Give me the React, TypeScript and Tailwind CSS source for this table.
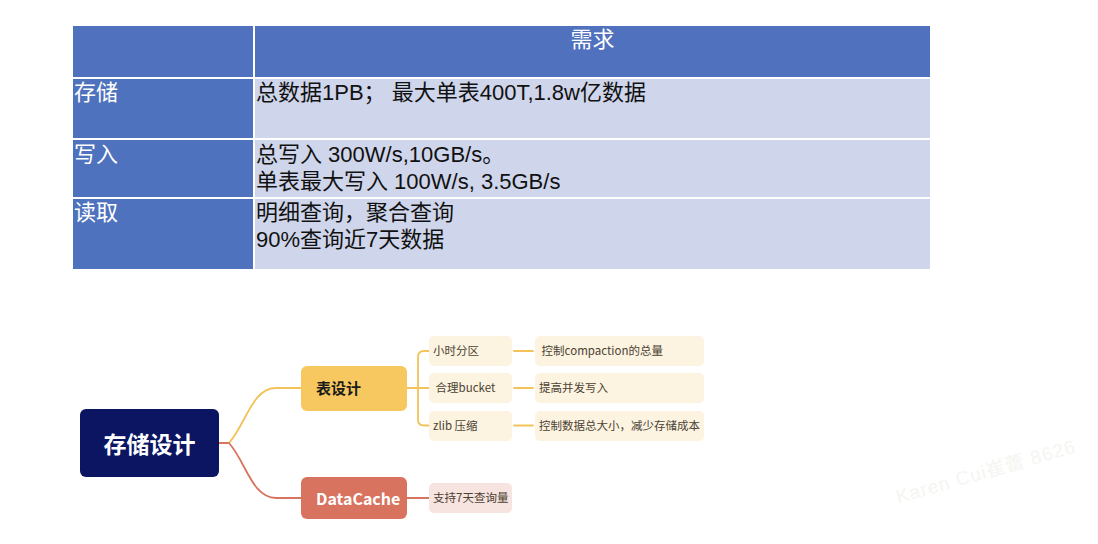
const rows = [
  { label: '存储', h: 'h-[59px]', lines: ['总数据1PB； 最大单表400T,1.8w亿数据'] },
  { label: '写入', h: 'h-[57px] pt-[1px]', lines: ['总写入 300W/s,10GB/s。', '单表最大写入 100W/s, 3.5GB/s'] },
  { label: '读取', h: 'h-[70px]', lines: ['明细查询，聚合查询', '90%查询近7天数据'] },
];

const tableDesign = [
  { name: '小时分区', note: ' 控制compaction的总量', top: 'top-[16px]' },
  { name: ' 合理bucket', note: '提高并发写入', top: 'top-[53px]' },
  { name: 'zlib 压缩', note: '控制数据总大小，减少存储成本', top: 'top-[91px]' },
];

function RequirementTable() {
  return (
    <div className="pl-[73px] pt-[26px]">
      <div className="grid w-[857px] grid-cols-[180px_675px] gap-x-[2px] gap-y-[2px] whitespace-pre font-['Liberation_Sans','Noto_Sans_CJK_SC',sans-serif] text-[22px] leading-[27px] text-[#111]">
        <div className="h-[51px] bg-[#4f71be]" />
        <div className="h-[51px] bg-[#4f71be] text-center text-white">需求</div>
        {rows.map((r) => (
          <>
            <div key={r.label + 'l'} className={`${r.h} bg-[#4e72bd] pl-[1px] text-white`}>
              {r.label}
            </div>
            <div key={r.label + 'r'} className={`${r.h} bg-[#cfd5ea] pl-[1px]`}>
              {r.lines.map((line) => (
                <div key={line}>{line}</div>
              ))}
            </div>
          </>
        ))}
      </div>
    </div>
  );
}

function MindMap() {
  return (
    <div className="relative mt-[51px] h-[210px] w-full font-['Noto_Sans_CJK_SC','Noto_Sans',sans-serif]">
      <svg className="absolute inset-0" width="1098" height="210" fill="none" strokeWidth="1.8" strokeLinecap="round">
        <path d="M219 123 H229" stroke="#d8735f" />
        <path d="M229 123 C246 104 252 68 276 68 H301" stroke="#f3c35a" />
        <path d="M229 123 C246 142 252 178 276 178 H301" stroke="#d8735f" />
        <path d="M407 68 H429 M429 31 H424 Q418 31 418 37 V99.5 Q418 105.5 424 105.5 H429" stroke="#f3c35a" />
        <path d="M514 31 H533 M514 68 H533 M514 105.5 H533" stroke="#f3c35a" />
        <path d="M407 178 H429" stroke="#d8735f" />
      </svg>

      {/* root */}
      <div className="absolute left-[80px] top-[89px] flex h-[68px] w-[139px] items-center justify-center rounded-[6px] bg-[#0b1561] text-[23px] font-bold text-white">
        存储设计
      </div>

      {/* level 1 */}
      <div className="absolute left-[301px] top-[46px] flex h-[45px] w-[106px] items-center rounded-[6px] bg-[#f6c85f] pl-[15px] text-[15px] font-bold text-[#1a1a1a]">
        表设计
      </div>
      <div className="absolute left-[301px] top-[157px] flex h-[42px] w-[106px] items-center rounded-[6px] bg-[#d8735f] pl-[15px] text-[16px] font-semibold text-white">
        DataCache
      </div>

      {/* level 2 */}
      {tableDesign.map((t) => (
        <>
          <div key={t.name} className={`absolute left-[429px] ${t.top} flex h-[30px] w-[83px] items-center whitespace-pre rounded-[5px] bg-[#fcf3e1] pl-[4px] text-[11.5px] text-[#4b4232]`}>
            {t.name}
          </div>
          <div key={t.note} className={`absolute left-[535px] ${t.top} flex h-[30px] w-[169px] items-center whitespace-pre rounded-[5px] bg-[#fcf3e1] pl-[4px] text-[11.5px] text-[#4b4232]`}>
            {t.note}
          </div>
        </>
      ))}
      <div className="absolute left-[429px] top-[163px] flex h-[30px] w-[83px] items-center rounded-[5px] bg-[#f7e3df] pl-[4px] text-[11.5px] text-[#4b4232]">
        支持7天查询量
      </div>

      {/* watermark */}
      <div className="absolute left-[893px] top-[138px] -rotate-[16deg] whitespace-nowrap font-['Liberation_Sans','Noto_Sans_CJK_SC',sans-serif] text-[19px] tracking-[1px] text-[#f5f5f1]">
        Karen Cui崔蕾 8626
      </div>
    </div>
  );
}

export default function App() {
  return (
    <div className="h-[544px] w-[1098px] overflow-hidden bg-white">
      <RequirementTable />
      <MindMap />
    </div>
  );
}
